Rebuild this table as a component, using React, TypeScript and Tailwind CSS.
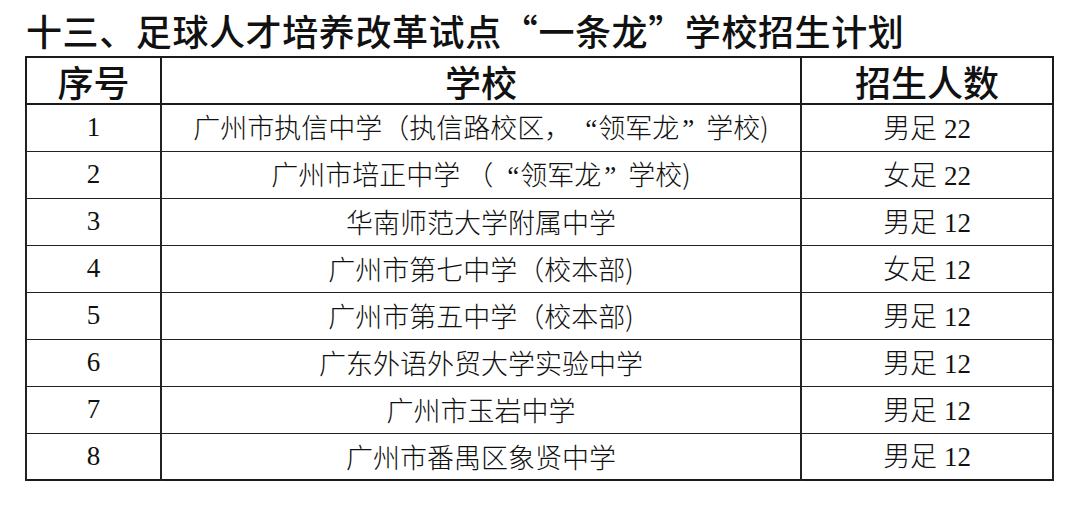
import React from 'react';

const rows = [
  { no: '1', school: '广州市执信中学（执信路校区，“领军龙”学校)', quota: '男足 22' },
  { no: '2', school: '广州市培正中学 （“领军龙”学校)', quota: '女足 22' },
  { no: '3', school: '华南师范大学附属中学', quota: '男足 12' },
  { no: '4', school: '广州市第七中学（校本部)', quota: '女足 12' },
  { no: '5', school: '广州市第五中学（校本部)', quota: '男足 12' },
  { no: '6', school: '广东外语外贸大学实验中学', quota: '男足 12' },
  { no: '7', school: '广州市玉岩中学', quota: '男足 12' },
  { no: '8', school: '广州市番禺区象贤中学', quota: '男足 12' },
];

const hei = { fontFamily: '"Noto Sans CJK SC", sans-serif' };
const song = { fontFamily: '"Liberation Serif", "Noto Sans CJK SC", serif' };

// the source sets its curly quotes full width: opening one sits right, closing one left
function School({ text }: { text: string }) {
  return (
    <>
      {text.split(/([“”])/).map((part, i) => {
        if (part === '“')
          return (
            <span key={i} className="inline-block w-[1em] text-right pr-[1px]" style={song}>
              “
            </span>
          );
        if (part === '”')
          return (
            <span key={i} className="inline-block w-[1em] text-left pl-[3px]" style={song}>
              ”
            </span>
          );
        return <React.Fragment key={i}>{part}</React.Fragment>;
      })}
    </>
  );
}

export default function App() {
  return (
    <div className="w-[1080px] h-[507px] bg-white text-[#111]">
      {/* Title */}
      <h1 className="pl-[26px] pt-[4px] h-[56px] text-[36px] leading-[52px] font-medium tracking-[0.6px]" style={hei}>
        十三、足球人才培养改革试点“一条龙”学校招生计划
      </h1>

      <div className="pl-[25px]">
        <table className="table-fixed border-collapse w-[1027px] border-2 border-[#1a1a1a]">
          <colgroup>
            <col className="w-[135px]" />
            <col className="w-[640px]" />
            <col className="w-[252px]" />
          </colgroup>
          <thead>
            <tr className="h-[47px]" style={hei}>
              <th className="border-2 border-[#1a1a1a] text-[36px] font-medium leading-none p-0">序号</th>
              <th className="border-2 border-[#1a1a1a] text-[36px] font-medium leading-none p-0">学校</th>
              <th className="border-2 border-[#1a1a1a] text-[36px] font-medium leading-none p-0">招生人数</th>
            </tr>
          </thead>
          <tbody>
            {rows.map((r) => (
              <tr key={r.no} className="h-[47px]">
                <td className="border-x-2 border-y-[1.5px] border-[#222] text-center text-[27px] leading-none p-0" style={song}>
                  {r.no}
                </td>
                <td className="border-x-2 border-y-[1.5px] border-[#222] text-center text-[27px] font-light leading-none p-0 whitespace-nowrap" style={hei}>
                  <School text={r.school} />
                </td>
                <td className="border-x-2 border-y-[1.5px] border-[#222] text-center text-[27px] leading-none p-0" style={song}>
                  <span className="font-light" style={hei}>{r.quota.slice(0, 2)}</span>
                  <span> {r.quota.slice(3)}</span>
                </td>
              </tr>
            ))}
          </tbody>
        </table>
      </div>
    </div>
  );
}
